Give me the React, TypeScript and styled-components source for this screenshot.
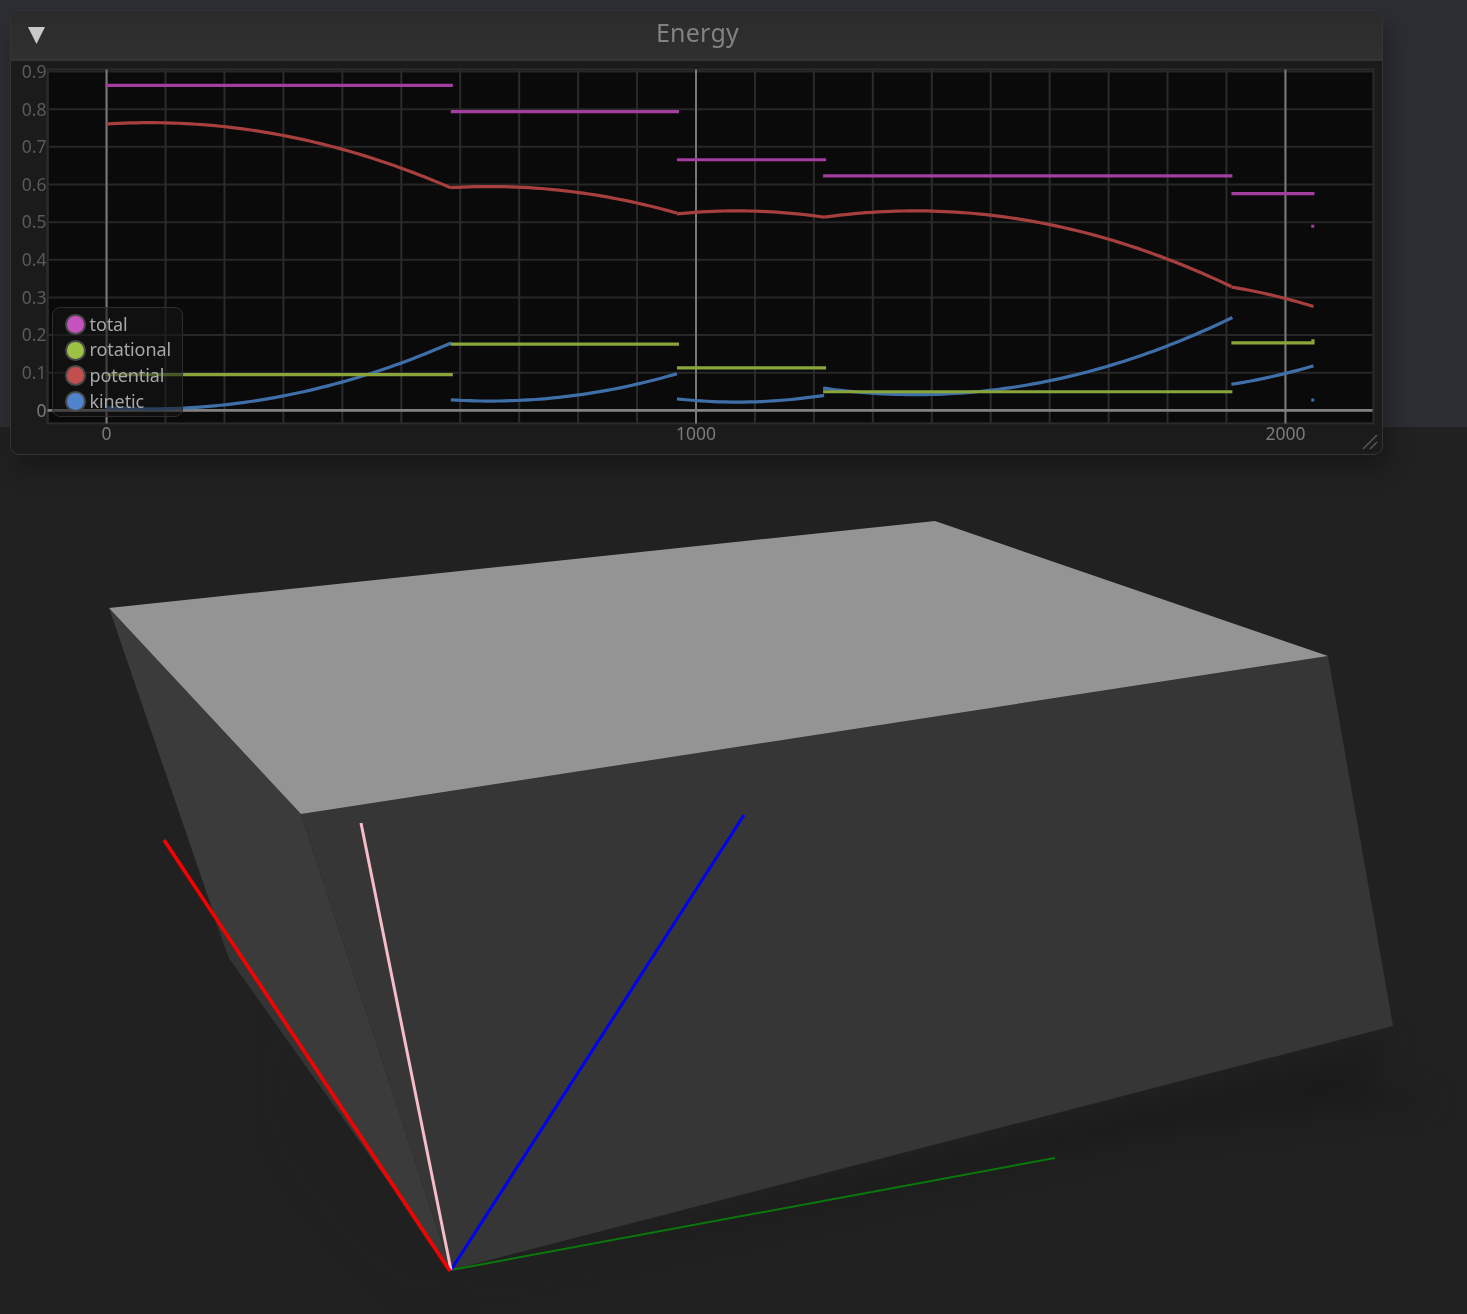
import React from "react";
import styled, { createGlobalStyle } from "styled-components";

const Global = createGlobalStyle`
  html, body { margin: 0; padding: 0; background: #212121; }
  #root { width: 1467px; }
`;

const UI_FONT = `"Noto Sans", "Open Sans", "Liberation Sans", sans-serif`;

const Page = styled.div`
  position: relative;
  width: 1467px;
  height: 1314px;
  overflow: hidden;
  display: grid;
  grid-template-rows: 427px 1fr;
  font-family: ${UI_FONT};
`;
const Backdrop = styled.div`
  background: #2c2e33;
`;
const Floor = styled.div`
  background: #212121;
  min-height: 0;
`;
const SceneSvg = styled.svg`
  display: block;
  width: 1467px;
  height: 887px;
  filter: blur(0.4px);
`;
const Panel = styled.section`
  position: absolute;
  left: 10px;
  top: 10px;
  width: 1373px;
  height: 445px;
  box-sizing: border-box;
  display: flex;
  flex-direction: column;
  background: #1b1b1b;
  border: 1.5px solid #343434;
  border-radius: 9px;
  box-shadow: 6px 14px 26px rgba(0, 0, 0, 0.3);
  overflow: hidden;
`;
const TitleBar = styled.header`
  flex: 0 0 50px;
  position: relative;
  display: flex;
  align-items: center;
  justify-content: center;
  box-sizing: border-box;
  background: linear-gradient(#2b2b2b, #303030);
  border-bottom: 2px solid #333333;
`;
const Collapse = styled.svg`
  position: absolute;
  left: 16px;
  top: 15px;
  width: 19px;
  height: 19px;
  filter: blur(0.3px);
`;
const Title = styled.h1`
  margin: 0;
  font-weight: 400;
  font-size: 25px;
  line-height: 1;
  color: #828282;
  letter-spacing: 0.25px;
  position: relative;
  top: -3px;
  left: 1px;
  filter: blur(0.4px);
`;
const PlotArea = styled.div`
  position: relative;
  flex: 1;
  min-height: 0;
`;
const PlotSvg = styled.svg`
  display: block;
  width: 100%;
  height: 100%;
  filter: blur(0.5px);
`;
const Legend = styled.ul`
  position: absolute;
  left: 40.5px;
  top: 246px;
  width: 131px;
  height: 110px;
  box-sizing: border-box;
  margin: 0;
  padding: 4px 0 0 14px;
  list-style: none;
  display: flex;
  flex-direction: column;
  background: rgba(22, 22, 22, 0.55);
  border: 1.5px solid #2d2d2d;
  border-radius: 8px;
  filter: blur(0.4px);
`;
const LegendRow = styled.li`
  display: flex;
  align-items: center;
  height: 25.6px;
  gap: 6px;
`;
const Swatch = styled.span<{ $c: string }>`
  width: 17px;
  height: 17px;
  flex: none;
  border-radius: 50%;
  background: ${(p) => p.$c};
  box-shadow: 0 0 0 2px #4a4a4a;
`;
const LegendLabel = styled.span`
  position: relative;
  top: -1px;
  font-size: 18px;
  line-height: 1;
  color: #a8a8a8;
  letter-spacing: -0.1px;
`;
const Grip = styled.svg`
  position: absolute;
  right: 3px;
  bottom: 3px;
  width: 18px;
  height: 18px;
`;
const AxisText = styled.text`
  font-family: ${UI_FONT};
  font-size: 17.5px;
`;

const X0 = 107;
const XK = 0.589;
const Y0 = 410;
const STEP = 37.55;
const minorX = Array.from({ length: 22 }, (_, i) => X0 + (i - 1) * 100 * XK).filter((x) => x < 1372);
const majorX = [0, 1000, 2000];
const yTicks = ["0", "0.1", "0.2", "0.3", "0.4", "0.5", "0.6", "0.7", "0.8", "0.9"];

const TOTAL: [number, number, number][] = [
  [85.8, 106, 453],
  [112, 451, 679],
  [160, 677, 826],
  [176, 823, 1232],
  [193.8, 1231, 1314],
];
const ROTATIONAL: [number, number, number][] = [
  [374.3, 106, 453],
  [344, 451, 679],
  [367.6, 677, 826],
  [391.4, 823, 1232],
];

// [x start, x end, vertex x, vertex y, curvature]: each stretch of the energy curves is a parabola
type Arc = [number, number, number, number, number];
const POTENTIAL: Arc[] = [
  [107, 451, 150, 123, 7.17e-4],
  [451, 677, 490, 186.7, 7.6e-4],
  [677, 824, 737, 211, 8.3e-4],
  [824, 1231, 915, 211, 7.56e-4],
  [1231, 1313, 1140, 279.5, 9e-4],
];
const KINETIC: Arc[] = [
  [107, 451.5, 150, 408.5, -7.24e-4],
  [451, 677, 490, 400.7, -7.8e-4],
  [677, 824, 737, 401.7, -8.85e-4],
  [823, 1232, 915, 394.3, -7.66e-4],
  [1231, 1313, 1140, 391, -8.5e-4],
];

function arcPath([a, b, v, c, k]: Arc): string {
  const pts: string[] = [];
  for (let x = a; x < b; x += 6) pts.push(`${x} ${(c + k * (x - v) * (x - v)).toFixed(2)}`);
  pts.push(`${b} ${(c + k * (b - v) * (b - v)).toFixed(2)}`);
  return "M" + pts.join("L");
}

const PURPLE = "#a33da0";
const GREEN = "#8aa63a";
const RED = "#a83f3f";
const BLUE = "#3f6fa9";

const LEGEND = [
  { name: "total", color: "#c552bf" },
  { name: "rotational", color: "#9dc145" },
  { name: "potential", color: "#c24e4e" },
  { name: "kinetic", color: "#4f83cc" },
];

function Chart() {
  return (
    <PlotSvg viewBox="11.5 61.5 1370 392" preserveAspectRatio="none">
      <rect x="48" y="70" width="1325" height="353" fill="#0a0a0a" stroke="#2c2c2c" strokeWidth="2" />
      {yTicks.map((t, i) => (
        <line key={t} x1="48" x2="1372" y1={Y0 - i * STEP} y2={Y0 - i * STEP} stroke="#272727" strokeWidth="2" />
      ))}
      {minorX.map((x) => (
        <line key={x} x1={x} x2={x} y1="70" y2="423" stroke="#2b2b2b" strokeWidth="2" />
      ))}
      {majorX.map((v) => (
        <line key={v} x1={X0 + v * XK} x2={X0 + v * XK} y1="70" y2="423" stroke="#787878" strokeWidth="2" />
      ))}
      <line x1="48" x2="1372" y1={Y0} y2={Y0} stroke="#808080" strokeWidth="2.6" />

      {TOTAL.map(([y, a, b]) => (
        <line key={a} x1={a} x2={b} y1={y} y2={y} stroke={PURPLE} strokeWidth="3.2" />
      ))}
      <rect x="1310.8" y="224.8" width="3" height="3" fill={PURPLE} />
      {POTENTIAL.map((s) => (
        <path key={s[0]} d={arcPath(s)} fill="none" stroke={RED} strokeWidth="3.2" />
      ))}
      {KINETIC.map((s) => (
        <path key={s[0]} d={arcPath(s)} fill="none" stroke={BLUE} strokeWidth="3.2" />
      ))}
      <rect x="1310.8" y="398.2" width="3" height="3" fill={BLUE} />
      {ROTATIONAL.map(([y, a, b]) => (
        <line key={a} x1={a} x2={b} y1={y} y2={y} stroke={GREEN} strokeWidth="3.2" />
      ))}
      <path d="M1231 342.7H1312.5V339" fill="none" stroke={GREEN} strokeWidth="3.2" />

      {yTicks.map((t, i) => (
        <AxisText key={t} x="47" y={Y0 - i * STEP + 6.3} textAnchor="end" fill={i === 0 ? "#7a7a7a" : "#5a5a5a"}>
          {t}
        </AxisText>
      ))}
      {[["0", 107], ["1000", 696], ["2000", 1285]].map(([t, x]) => (
        <AxisText key={t as string} x={x as number} y="440" textAnchor="middle" fill="#7a7a7a">
          {t}
        </AxisText>
      ))}
    </PlotSvg>
  );
}

function Scene() {
  return (
    <SceneSvg viewBox="0 427 1467 887">
      <defs>
        <filter id="soft" x="-20%" y="-40%" width="140%" height="180%" colorInterpolationFilters="sRGB">
          <feGaussianBlur stdDeviation="13" />
        </filter>
        <filter id="softer" x="-30%" y="-40%" width="160%" height="180%" colorInterpolationFilters="sRGB">
          <feGaussianBlur stdDeviation="30" />
        </filter>
      </defs>
      <polygon points="300,1040 451,1285 330,1130" fill="#1b1b1b" filter="url(#softer)" />
      <polygon points="451,1285 1393,1040 1360,1085 1440,1100 1150,1135" fill="#1b1b1b" filter="url(#soft)" />
      <polygon points="109,608 229,958 451,1270 301,814" fill="#3b3b3b" />
      <polygon points="229,958 451,1270 430,1245 215,920" fill="#343434" />
      <polygon points="301,814 1328,656 1393,1026 451,1270" fill="#363636" />
      <polygon points="109,608 935,521 1328,656 301,814" fill="#949494" />
      <line x1="451" y1="1270" x2="1055" y2="1158" stroke="#0a780a" strokeWidth="2" />
      <line x1="451" y1="1270" x2="744" y2="815" stroke="#0000f6" strokeWidth="3" />
      <line x1="451" y1="1270" x2="361" y2="823" stroke="#f6bcc8" strokeWidth="3" />
      <line x1="450" y1="1271" x2="164" y2="840" stroke="#f80000" strokeWidth="3.6" />
    </SceneSvg>
  );
}

export default function App() {
  return (
    <>
      <Global />
      <Page>
        <Backdrop />
        <Floor>
          <Scene />
        </Floor>
        <Panel>
          <TitleBar>
            <Collapse viewBox="0 0 19 19">
              <polygon points="1,1 18,1 9.5,18" fill="#c9c9c9" />
            </Collapse>
            <Title>Energy</Title>
          </TitleBar>
          <PlotArea>
            <Chart />
            <Legend>
              {LEGEND.map((l) => (
                <LegendRow key={l.name}>
                  <Swatch $c={l.color} />
                  <LegendLabel>{l.name}</LegendLabel>
                </LegendRow>
              ))}
            </Legend>
            <Grip viewBox="0 0 18 18">
              <path d="M2 16L16 2M9 16L16 9" stroke="#555555" strokeWidth="1.5" fill="none" />
            </Grip>
          </PlotArea>
        </Panel>
      </Page>
    </>
  );
}
